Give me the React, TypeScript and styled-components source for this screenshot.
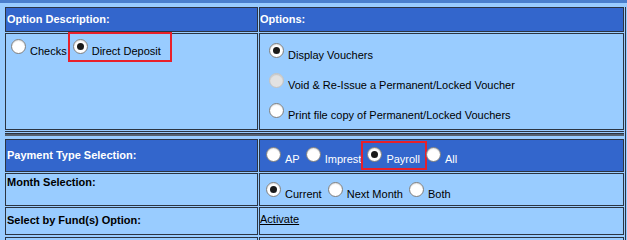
import React from 'react';
import styled, { createGlobalStyle, css } from 'styled-components';

const GlobalStyle = createGlobalStyle`
	html, body {
		margin: 0;
		padding: 0;
		background: #99ccff;
		overflow: hidden;
	}
	body {
		font-family: 'Liberation Sans', Arial, sans-serif;
		font-size: 11px;
		line-height: 13px;
		color: #000;
	}
`;

const Page = styled.div`
	width: 627px;
	height: 240px;
	overflow: hidden;
	background: #99ccff;
`;

const TopStrip = styled.div`
	height: 3px;
	background: #4a7fcd;
`;

const Form = styled.div`
	display: grid;
	grid-template-columns: 253px 365px 2px;
	grid-template-rows: 25px 97px auto 33px 33px 28px 20px;
	column-gap: 1px;
	row-gap: 1px;
	padding: 4px 0 0 5px;
`;

type CellProps = {
	$head?: boolean;
	$pad?: string;
	$align?: string;
	$column?: boolean;
	$gap?: number;
};
const Cell = styled.div<CellProps>`
	box-sizing: border-box;
	display: flex;
	flex-direction: ${({ $column }) => ($column ? 'column' : 'row')};
	align-items: ${({ $align }) => $align || 'flex-start'};
	gap: ${({ $gap }) => $gap || 0}px;
	padding: ${({ $pad }) => $pad || '0 0 0 1px'};
	border: 1px solid #2b3442;
	background: ${({ $head }) => ($head ? '#3366cc' : '#99ccff')};
	color: ${({ $head }) => ($head ? '#fff' : '#000')};
`;

const Label = styled.span`
	font-weight: bold;
	white-space: nowrap;
`;

const Separator = styled.div`
	grid-column: 1 / 3;
	height: 1px;
	border-top: 1px solid #2b3442;
	border-bottom: 1px solid #2b3442;
	box-shadow: 0 2px 0 #55606e;
	margin-bottom: 4px;
`;

const LastRow = styled(Cell)`
	margin-top: 1px;
`;

const RightEdge = styled.div`
	grid-column: 3;
	grid-row: 1 / -1;
	border-left: 1px solid #2b3442;
`;

const Choice = styled.span<{ $mark?: string }>`
	position: relative;
	display: inline-flex;
	align-items: flex-start;
	gap: 4px;
	white-space: nowrap;
	${({ $mark }) =>
		$mark &&
		css`
			&::after {
				content: '';
				position: absolute;
				inset: ${$mark};
				border: 2px solid #e8202a;
			}
		`}
`;

type RadioProps = {
	$checked?: boolean;
	$disabled?: boolean;
};
const Radio = styled.span<RadioProps>`
	box-sizing: border-box;
	flex: none;
	width: 15px;
	height: 15px;
	border-radius: 50%;
	border: 1px solid ${({ $disabled }) => ($disabled ? '#c2c2c2' : '#7e7e7e')};
	background: ${({ $disabled }) => ($disabled ? '#e2e2e2' : '#fff')};
	box-shadow: inset 0 1px 1px rgba(0, 0, 0, 0.12);
	display: flex;
	align-items: center;
	justify-content: center;
	&::after {
		content: '';
		display: ${({ $checked }) => ($checked ? 'block' : 'none')};
		width: 7px;
		height: 7px;
		border-radius: 50%;
		background: #1a1a1a;
	}
`;

const ChoiceText = styled.span`
	padding-top: 6px;
`;

const Link = styled.a`
	color: #000;
	text-decoration: underline;
	cursor: pointer;
`;

type Opt = {
	text: string;
	checked?: boolean;
	disabled?: boolean;
	mark?: string;
};

const Option = ({ text, checked, disabled, mark }: Opt) => (
	<Choice $mark={mark}>
		<Radio $checked={checked} $disabled={disabled} />
		<ChoiceText>{text}</ChoiceText>
	</Choice>
);

const voucherOptions: Opt[] = [
	{ text: 'Display Vouchers', checked: true },
	{ text: 'Void & Re-Issue a Permanent/Locked Voucher', disabled: true },
	{ text: 'Print file copy of Permanent/Locked Vouchers' },
];

const paymentTypes: Opt[] = [
	{ text: 'AP' },
	{ text: 'Imprest' },
	{ text: 'Payroll', checked: true, mark: '-6px -7px -4px -6px' },
	{ text: 'All' },
];

const months: Opt[] = [{ text: 'Current', checked: true }, { text: 'Next Month' }, { text: 'Both' }];

const App = () => {
	return (
		<Page>
			<GlobalStyle />
			<TopStrip />
			<Form>
				<Cell $head $align="center">
					<Label>Option Description:</Label>
				</Cell>
				<Cell $head $align="center" $pad="0">
					<Label>Options:</Label>
				</Cell>

				<Cell $pad="5px 0 0 5px" $gap={6}>
					<Option text="Checks" />
					<Option text="Direct Deposit" checked mark="-7px -11px -4px -5px" />
				</Cell>
				<Cell $column $pad="9px 0 0 9px" $gap={11}>
					{voucherOptions.map((o) => (
						<Option key={o.text} {...o} />
					))}
				</Cell>

				<Separator />

				<Cell $head $align="center">
					<Label>Payment Type Selection:</Label>
				</Cell>
				<Cell $head $pad="7px 0 0 6px" $gap={6}>
					{paymentTypes.map((o) => (
						<Option key={o.text} {...o} />
					))}
				</Cell>

				<Cell $pad="2px 0 0 1px">
					<Label>Month Selection:</Label>
				</Cell>
				<Cell $pad="8px 0 0 6px" $gap={6}>
					{months.map((o) => (
						<Option key={o.text} {...o} />
					))}
				</Cell>

				<Cell $pad="6px 0 0 1px">
					<Label>Select by Fund(s) Option:</Label>
				</Cell>
				<Cell $pad="5px 0 0 0">
					<Link>Activate</Link>
				</Cell>

				<LastRow />
				<LastRow />

				<RightEdge />
			</Form>
		</Page>
	);
};

export default App;
